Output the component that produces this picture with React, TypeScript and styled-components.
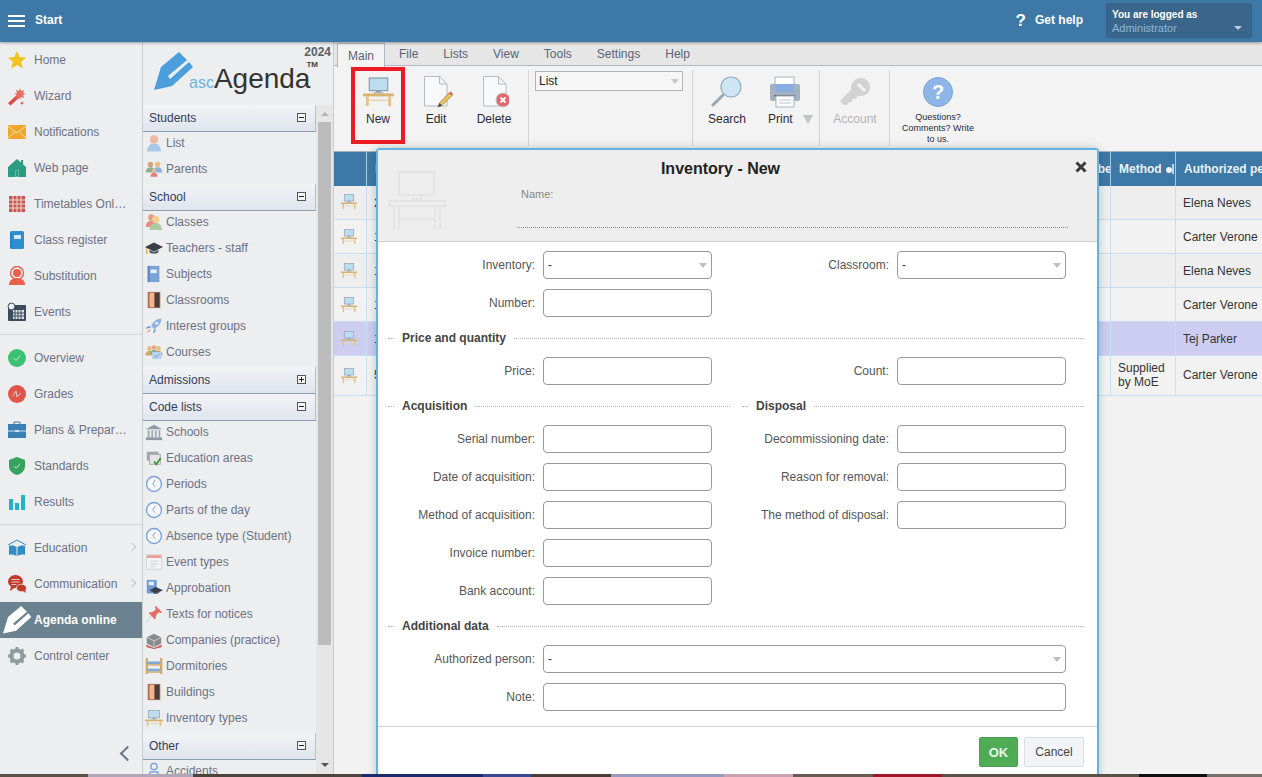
import React from 'react';
import styled, { createGlobalStyle } from 'styled-components';

const Global = createGlobalStyle`
  html, body { margin: 0; padding: 0; height: 100%; overflow: hidden; }
  body { font-family: "Liberation Sans", Arial, sans-serif; font-size: 12px; }
  #root { height: 100%; }
  * { box-sizing: border-box; }
`;

/* ---------- icons ---------- */
const Ico: React.FC<{ s?: number; v?: string; children: React.ReactNode }> = ({ s = 18, v = '0 0 20 20', children }) => (
  <svg width={s} height={s} viewBox={v} aria-hidden="true">{children}</svg>
);

const PENCIL = '0,38 7,15 25,0 33,8 14,24 16,27 35,10 39,15 18,34';
const PencilLogo: React.FC<{ s: number; c: string }> = ({ s, c }) => (
  <svg width={s} height={s} viewBox="0 0 40 40" aria-hidden="true"><polygon points={PENCIL} fill={c} /></svg>
);

const Desk: React.FC<{ w: number }> = ({ w }) => (
  <svg width={w} height={w * 0.94} viewBox="0 0 32 30" aria-hidden="true">
    <rect x="6.5" y="1" width="19" height="13" fill="#bcdcf0" stroke="#8b9bab" strokeWidth="1.2" />
    <rect x="13.5" y="14" width="5" height="2" fill="#8b9bab" />
    <rect x="11" y="15.5" width="10" height="1.5" fill="#aab6c0" />
    <rect x="6" y="23" width="20" height="2" fill="#e6d9bf" />
    <rect x="3" y="20" width="3" height="10" fill="#e0c48e" />
    <rect x="26" y="20" width="3" height="10" fill="#e0c48e" />
    <rect x="0" y="17" width="32" height="3" fill="#d8b26f" />
  </svg>
);

const FaintDesk = () => (
  <svg width="58" height="60" viewBox="0 0 58 60" fill="none" stroke="#e4e4e4" strokeWidth="2" aria-hidden="true">
    <rect x="11" y="2" width="35" height="23" />
    <path d="M25 25v4h8v-4M20 31h18" />
    <rect x="1" y="31" width="56" height="5" />
    <rect x="6" y="36" width="5" height="24" />
    <rect x="47" y="36" width="5" height="24" />
    <path d="M11 49h36" />
  </svg>
);

const DocBase = () => (
  <path d="M.5 .5h15l7.500 7.500v22H.5z M15.500 .5v7.500h7.500" fill="#f8f9fb" stroke="#b3bcc8" strokeWidth="1" />
);
const EditDoc = () => (
  <svg width="34" height="32" viewBox="0 0 34 32" aria-hidden="true">
    <g transform="translate(5 0)"><DocBase /></g>
    <path d="M19 31l1.500 -4 9.500 -10 3 2.500 -10 10z" fill="#edc35c" stroke="#8a7240" strokeWidth="0.7" />
    <path d="M30 17l3 2.500 1 -1.500 -2.500 -2.500z" fill="#e0605c" />
    <path d="M19 31l1.500 -4 2.500 2.500z" fill="#444" />
  </svg>
);
const DeleteDoc = () => (
  <svg width="30" height="32" viewBox="0 0 30 32" aria-hidden="true">
    <g transform="translate(4 0)"><DocBase /></g>
    <circle cx="24" cy="24" r="7" fill="#e2666c" stroke="#c8c8c8" />
    <path d="M21.500 21.500l5 5m0 -5l-5 5" stroke="#fff" strokeWidth="1.8" />
  </svg>
);
const SearchIco = () => (
  <svg width="32" height="32" viewBox="0 0 32 32" aria-hidden="true">
    <line x1="2" y1="29" x2="12" y2="19" stroke="#9aa8b4" strokeWidth="3" strokeLinecap="round" />
    <circle cx="20" cy="11" r="10" fill="#cfe5f6" stroke="#8facbe" strokeWidth="1.2" />
  </svg>
);
const PrintIco = () => (
  <svg width="32" height="32" viewBox="0 0 32 32" aria-hidden="true">
    <rect x="6" y="1" width="19" height="10" fill="#fff" stroke="#a8b2bc" />
    <rect x="1" y="8" width="30" height="17" rx="2" fill="#a4b1c3" />
    <rect x="6" y="8" width="19" height="8" fill="#88ade0" />
    <rect x="5" y="19" width="21" height="1.5" fill="#5c6878" />
    <rect x="7" y="20" width="18" height="11" fill="#fff" stroke="#a8b2bc" />
    <path d="M10 24h12M10 27h12" stroke="#b8c2cc" />
  </svg>
);
const KeyIco = () => (
  <svg width="32" height="32" viewBox="0 0 32 32" aria-hidden="true">
    <path d="M1 25l11 -11c-1 -7 4 -12 10 -12 5 0 9 4 9 9 0 6 -6 10 -12 9l-3 3h-3v3h-3l-2 3h-3z" fill="#d2d2d2" />
    <path d="M19 8l7 7" stroke="#f3f3f3" strokeWidth="3" />
  </svg>
);
const HelpIco = () => (
  <svg width="30" height="30" viewBox="0 0 30 30" aria-hidden="true">
    <circle cx="15" cy="15" r="14.5" fill="#8db5e8" stroke="#7aa2d4" />
    <text x="15" y="22" textAnchor="middle" fontFamily="Liberation Sans" fontWeight="700" fontSize="20" fill="#fff">?</text>
  </svg>
);

const navIcons: Record<string, React.ReactNode> = {
  star: <Ico s={20}><polygon points="10,1 12.7,7 19,7.6 14.2,12 15.7,18.6 10,15.1 4.3,18.6 5.8,12 1,7.6 7.3,7" fill="#f2c31c" /></Ico>,
  wand: <Ico s={20}><path d="M1 17l10 -9 2.5 2.5 -10 9z" fill="#d94f44" /><path d="M13 2l1 3 3 -1 -1 3 3 1 -3 1 1 3 -3 -1 -1 3 -1 -3 -3 1 1 -3 -3 -1 3 -1 -1 -3 3 1z" fill="#e66f63" /><path d="M15 15l.6 1.5 1.5.6 -1.5.6 -.6 1.5 -.6 -1.5 -1.5 -.6 1.5 -.6z" fill="#d94f44" /></Ico>,
  mail: <Ico s={20}><rect x="1" y="3" width="18" height="14" fill="#f0a52c" /><path d="M1 4l9 7 9 -7M1 16l7 -6.5M19 16l-7 -6.5" stroke="#fbe2b6" fill="none" /></Ico>,
  house: <Ico s={20}><path d="M10 1l9 8v10H1V9zM14 2h2v4h-2z" fill="#2c9b83" /><rect x="8" y="12" width="4" height="7" fill="#5cbba6" /><rect x="9" y="13" width="2" height="5" fill="#2c9b83" /></Ico>,
  table: <Ico s={20}><rect x="2" y="2" width="16" height="16" fill="#c9564f" /><path d="M6 2v16M10 2v16M14 2v16M2 6h16M2 10h16M2 14h16" stroke="#f0d8d5" strokeWidth="1" /></Ico>,
  book: <Ico s={20}><rect x="3" y="1" width="14" height="18" rx="1.5" fill="#2e8fd0" /><rect x="7" y="5" width="7" height="4" fill="#d4e9f7" /><path d="M3 4h2M3 8h2M3 12h2M3 16h2" stroke="#1b6aa0" /></Ico>,
  sub: <Ico s={20}><circle cx="10" cy="7" r="6.5" fill="none" stroke="#e8604c" strokeWidth="1.4" /><circle cx="10" cy="7" r="4" fill="#e8604c" /><path d="M2 19c0 -5 4 -7 8 -7s8 2 8 7z" fill="#e8604c" /></Ico>,
  events: <Ico s={20}><rect x="1" y="3" width="18" height="16" rx="1" fill="#3b4b5d" /><rect x="6" y="8" width="11" height="9" fill="#dfe4e8" /><path d="M8 8v9M11 8v9M14 8v9M6 11h11M6 14h11" stroke="#3b4b5d" /><circle cx="4.5" cy="4.5" r="3.4" fill="#eceef0" stroke="#3b4b5d" /></Ico>,
  ok: <Ico s={20}><circle cx="10" cy="10" r="9" fill="#3cc173" /><path d="M6.5 10l2.5 2.5 4.5 -5" stroke="#c9f0d7" fill="none" /></Ico>,
  grades: <Ico s={20}><circle cx="10" cy="10" r="9" fill="#e0564a" /><path d="M6 12l3 -5 1 6 4 -4" stroke="#f6d0cb" fill="none" /></Ico>,
  plans: <Ico s={20}><path d="M7 4V2h6v2" fill="none" stroke="#3a80b4" /><rect x="1" y="4" width="18" height="14" fill="#3a80b4" /><path d="M1 11h18" stroke="#cfe2ef" /><rect x="8" y="10" width="4" height="2" fill="#cfe2ef" /></Ico>,
  shield: <Ico s={20}><path d="M10 1l8 3v6c0 5 -4 8 -8 9 -4 -1 -8 -4 -8 -9V4z" fill="#34a45f" /><path d="M7 10l2.2 2.2 4 -4.5" stroke="#c9ecd7" fill="none" /></Ico>,
  bars: <Ico s={20}><rect x="2" y="7" width="4" height="11" fill="#1fb3cb" /><rect x="8" y="11" width="4" height="7" fill="#1fb3cb" /><rect x="14" y="3" width="4" height="15" fill="#1fb3cb" /></Ico>,
  edu: <Ico s={20}><path d="M1 7l9 -5 9 5" stroke="#2f8cc4" fill="none" /><path d="M2 8c3 -1 6 0 7.5 1v9C8 17 5 16 2 17zM18 8c-3 -1 -6 0 -7.5 1v9c1.500 -1 4.500 -2 7.500 -1z" fill="#2f8cc4" /></Ico>,
  chat: <Ico s={20}><ellipse cx="8.500" cy="7.500" rx="7.500" ry="6.500" fill="#c0392b" /><path d="M4 12l-1 5 5 -3.500z" fill="#c0392b" /><path d="M4.500 5.500h8M4.500 8h8M4.500 10.500h5" stroke="#f1c9c4" /><ellipse cx="14.500" cy="14" rx="5" ry="3.800" fill="#c0392b" stroke="#eceef0" strokeWidth=".8" /><path d="M16 17l3 2 -1 -3.500z" fill="#c0392b" /></Ico>,
  agenda: <PencilLogo s={29} c="#ffffff" />,
  gear: <Ico s={20}><circle cx="10" cy="10" r="5.500" fill="none" stroke="#8c9c9e" strokeWidth="4" /><path d="M10 1v3M10 16v3M1 10h3M16 10h3M3.600 3.600l2.100 2.100M14.300 14.300l2.100 2.100M3.600 16.400l2.100 -2.100M14.300 5.700l2.100 -2.100" stroke="#8c9c9e" strokeWidth="3" /></Ico>,
};

const Head: React.FC<{ x: number; y: number; r: number; c: string; b: string }> = ({ x, y, r, c, b }) => (
  <g><path d={`M${x - r * 1.7} ${y + r * 3}c0 ${-r * 1.6} ${r} ${-r * 2} ${r * 1.7} ${-r * 2}s${r * 1.7} ${r * 0.4} ${r * 1.7} ${r * 2}z`} fill={b} /><circle cx={x} cy={y} r={r} fill={c} /></g>
);
const Clock = () => <Ico><circle cx="10" cy="10" r="8.300" fill="#f3f6fa" stroke="#7ba3d8" strokeWidth="1.500" /><path d="M11.500 5.500L8.500 10l3 3" fill="none" stroke="#8a98a8" /></Ico>;
const Door = () => <Ico><rect x="3" y="1" width="14" height="18" fill="#a8715a" /><rect x="5" y="2" width="5" height="16" fill="#f0b58c" /><rect x="11" y="2" width="5" height="16" fill="#4a3c38" /></Ico>;

const sideIcons: Record<string, React.ReactNode> = {
  student: <Ico><Head x={10} y={6} r={4.500} c="#f0b9a0" b="#a9c8ea" /></Ico>,
  parents: <Ico><Head x={6} y={5} r={3} c="#d6a080" b="#8fb28a" /><Head x={14} y={5} r={3} c="#e8c080" b="#8fb0dc" /><Head x={10} y={12} r={2.200} c="#f0b9a0" b="#e07d78" /></Ico>,
  classes: <Ico><Head x={7} y={5} r={3.500} c="#e49c84" b="#e88a80" /><Head x={12} y={7} r={4} c="#f0cf90" b="#a8cca0" /></Ico>,
  cap: <Ico><path d="M10 4l10 5 -10 5 -10 -5z" fill="#3a3f47" /><path d="M5 12v3c3 2 7 2 10 0v-3l-5 2.500z" fill="#555b64" /><path d="M2 10v7" stroke="#e0a040" strokeWidth="1.200" /></Ico>,
  subject: <Ico><rect x="3" y="1" width="13" height="18" fill="#7ba3d8" /><rect x="6" y="5" width="7" height="4" fill="#e6eef8" /><rect x="3" y="1" width="2" height="18" fill="#5a86c0" /></Ico>,
  door: <Door />,
  rocket: <Ico><path d="M18 2c-5 0 -9 3 -11 8l3 3c5 -2 8 -6 8 -11z" fill="#8db2e6" /><path d="M6 10l-4 1 -1 2 5 -1zM10 14l-1 4 2 -1 1 -5z" fill="#6f96d0" /><path d="M5 14l-3 4 4 -3z" fill="#e06a5a" /><circle cx="13" cy="7" r="1.500" fill="#fff" /></Ico>,
  courses: <Ico><Head x={5} y={6} r={2.600} c="#e8bc80" b="#d8a860" /><Head x={10} y={5} r={2.600} c="#e0a890" b="#88b090" /><Head x={15} y={6} r={2.600} c="#e8c080" b="#c0a070" /><rect x="8" y="10" width="10" height="8" fill="#b8d4f0" /><path d="M10 14l2 2 4 -4" stroke="#6a90c0" fill="none" /></Ico>,
  museum: <Ico><path d="M10 2l9 5H1z" fill="#8f9aa6" /><path d="M3 8h2v8H3zM7 8h2v8H7zM11 8h2v8h-2zM15 8h2v8h-2z" fill="#a0aab4" /><rect x="1" y="16" width="18" height="3" fill="#8f9aa6" /></Ico>,
  areas: <Ico><rect x="2" y="3" width="13" height="10" fill="#a6a6a6" /><rect x="5" y="6" width="12" height="11" fill="#e4e4e4" stroke="#aaa" /><path d="M10 14l2.500 3 5 -7" stroke="#3a9a3a" strokeWidth="2" fill="none" /></Ico>,
  clock: <Clock />,
  calendar: <Ico><rect x="1.500" y="2" width="17" height="16" fill="#f4f4f4" stroke="#cdd3d8" /><rect x="2" y="2.500" width="16" height="3" fill="#e89a94" /><path d="M6 9h9M6 12h9M6 15h6" stroke="#dce0e4" strokeWidth="2" /></Ico>,
  approb: <Ico><rect x="2" y="1" width="11" height="15" fill="#6d9ad8" /><rect x="4" y="3" width="6" height="4" fill="#e4edf8" /><path d="M12 9l8 3.500 -8 3.500 -7 -3.500z" fill="#3a3f47" /><path d="M8 15c2 2 6 2 8 0v-2l-4 2z" fill="#555" /></Ico>,
  pin: <Ico><path d="M1 19l7 -8" stroke="#c8c8c8" /><path d="M12 1l7 7 -2 1 -2 -1 -3 4 0 3 -1 1 -7 -7 1 -1h3l4 -3 -1 -3z" fill="#e96a62" /></Ico>,
  company: <Ico><path d="M2 7l8 -4 8 4v7l-8 4 -8 -4z" fill="#8a8a8a" /><path d="M2 7l8 4 8 -4M10 11v7" stroke="#d0d0d0" fill="none" /><path d="M1 15l9 4 9 -4 -1 3 -8 2 -8 -2z" fill="#c86058" /></Ico>,
  bunk: <Ico><path d="M2 1v18M18 1v18" stroke="#d0a868" strokeWidth="2.500" /><rect x="3" y="5" width="14" height="3" fill="#7ea8d8" /><rect x="3" y="8" width="14" height="1.500" fill="#d0a868" /><rect x="3" y="13" width="14" height="3" fill="#7ea8d8" /><rect x="3" y="16" width="14" height="1.500" fill="#d0a868" /></Ico>,
  building: <Door />,
  desk: <Desk w={18} />,
  accident: <Ico><circle cx="10" cy="5" r="3.500" fill="none" stroke="#6d9ad8" strokeWidth="1.400" /><path d="M3 19l3 -8h8l3 8" fill="none" stroke="#6d9ad8" strokeWidth="1.400" /></Ico>,
};

/* ---------- page frame ---------- */
const Root = styled.div`
  display: flex;
  flex-direction: column;
  width: 100%;
  height: 100%;
  overflow: hidden;
  background: #f2f2f2;
`;
const TopBar = styled.header`
  flex: 0 0 42px;
  display: flex;
  align-items: center;
  padding-bottom: 1px;
  position: relative;
  z-index: 5;
  background: #3e78a6;
  box-shadow: 0 1px 3px rgba(0, 0, 0, 0.35);
  color: #fff;
`;
const Burger = styled.div`
  width: 17px;
  height: 12px;
  margin: 0 10px 0 8px;
  border-top: 2px solid #fff;
  border-bottom: 2px solid #fff;
  position: relative;
  &::after {
    content: '';
    position: absolute;
    left: 0;
    right: 0;
    top: 3px;
    height: 2px;
    background: #fff;
  }
`;
const StartText = styled.span`
  font-weight: 700;
  font-size: 12px;
  flex: 1;
  margin-bottom: 2px;
`;
const HelpMark = styled.span`
  font-weight: 700;
  font-size: 17px;
  margin-right: 9px;
`;
const HelpText = styled.span`
  font-weight: 700;
  font-size: 12px;
  margin-right: 23px;
  margin-bottom: 2px;
`;
const UserBox = styled.div`
  width: 146px;
  height: 35px;
  margin-right: 10px;
  padding: 4px 5px 0;
  background: #3a668c;
  border: 1px solid #37618a;
  border-radius: 2px;
  position: relative;
`;
const UserTitle = styled.div`
  font-size: 10px;
  font-weight: 700;
  line-height: 13px;
`;
const UserName = styled.div`
  font-size: 11px;
  line-height: 15px;
  color: #8fb6d8;
`;
const UserArrow = styled.i`
  position: absolute;
  right: 9px;
  bottom: 7px;
  border: 4px solid transparent;
  border-top-color: #b8cde0;
  border-bottom-width: 0;
`;
const Body = styled.div`
  flex: 1;
  min-height: 0;
  display: flex;
`;
const Strip = styled.div`
  flex: 0 0 3px;
  background: linear-gradient(
    to right,
    #5a5045 0 88px, #b0a8b8 88px 193px, #4c443e 193px 362px, #1c2a6e 362px 483px, #3a4a90 483px 531px,
    #4a3c38 531px 611px, #9a9ac0 611px 724px, #c8a0b0 724px 793px, #6a5c50 793px 873px, #a01828 873px 942px,
    #5a5045 942px 1139px, #111 1139px 1207px, #77706a 1207px
  );
`;

/* ---------- left navigation ---------- */
const Nav = styled.nav`
  flex: 0 0 143px;
  display: flex;
  flex-direction: column;
  background: #eceef0;
  border-right: 1px solid #c9cbcd;
`;
const NavItem = styled.div<{ $active?: boolean }>`
  height: 36px;
  flex: none;
  display: flex;
  align-items: center;
  position: relative;
  font-size: 12px;
  color: ${(p) => (p.$active ? '#fff' : '#6d7285')};
  font-weight: ${(p) => (p.$active ? 700 : 400)};
  background: ${(p) => (p.$active ? '#6b8390' : 'transparent')};
  white-space: nowrap;
`;
const NavIcon = styled.span`
  flex: 0 0 34px;
  display: flex;
  justify-content: center;
  align-items: center;
`;
const NavLabel = styled.span`
  width: 94px;
  overflow: hidden;
  text-overflow: ellipsis;
`;
const NavChevron = styled.span`
  position: absolute;
  right: 7px;
  top: 14px;
  width: 6px;
  height: 6px;
  border-top: 1px solid #c4c7cb;
  border-right: 1px solid #c4c7cb;
  transform: rotate(45deg);
`;
const NavDivider = styled.div`
  flex: none;
  height: 0;
  border-top: 1px solid #d4d6d8;
  margin: 4px 0 5px;
`;
const Collapse = styled.div`
  margin-top: auto;
  margin-bottom: 15px;
  align-self: flex-end;
  margin-right: 9px;
  width: 11px;
  height: 11px;
  border-left: 2px solid #6a7a8a;
  border-bottom: 2px solid #6a7a8a;
  transform: rotate(45deg);
`;

/* ---------- secondary sidebar ---------- */
const Sidebar = styled.aside`
  flex: 0 0 191px;
  display: flex;
  flex-direction: column;
  background: #eceef0;
  border-right: 1px solid #c9cbcd;
  min-height: 0;
`;
const LogoBlock = styled.div`
  flex: 0 0 63px;
  display: flex;
  align-items: flex-end;
  padding: 0 0 13px 11px;
  position: relative;
`;
const LogoYear = styled.span`
  position: absolute;
  right: 2px;
  top: 3px;
  font-size: 12px;
  font-weight: 700;
  color: #5a5f68;
`;
const LogoAsc = styled.span`
  font-size: 16px;
  line-height: 16px;
  color: #6fb1e2;
  margin-left: -5px;
  margin-bottom: 1px;
`;
const LogoWord = styled.span`
  font-size: 28px;
  line-height: 20px;
  color: #333;
  margin-bottom: 3px;
`;
const LogoTm = styled.span`
  font-size: 8px;
  font-weight: 700;
  line-height: 8px;
  color: #444;
  align-self: flex-start;
  margin: 19px 0 0 -4px;
`;
const SideScroll = styled.div`
  flex: 1;
  min-height: 0;
  display: flex;
  overflow: hidden;
`;
const SideList = styled.div`
  flex: 0 0 173px;
  min-width: 0;
`;
const GroupHead = styled.div`
  height: 27px;
  display: flex;
  align-items: center;
  justify-content: space-between;
  padding: 0 9px 1px 6px;
  font-size: 12px;
  color: #333c58;
  background: linear-gradient(#f2f3f6, #dfe5ee);
  border-bottom: 1px solid #8f9bb0;
  border-right: 1px solid #b8c0cc;
`;
const Toggle = styled.span<{ $open?: boolean }>`
  width: 9px;
  height: 9px;
  border: 1px solid #555;
  position: relative;
  background: #f4f5f7;
  &::before {
    content: '';
    position: absolute;
    left: 1px;
    right: 1px;
    top: 3px;
    height: 1px;
    background: #222;
  }
  &::after {
    content: '';
    position: absolute;
    top: 1px;
    bottom: 1px;
    left: 3px;
    width: 1px;
    background: #222;
    display: ${(p) => (p.$open ? 'none' : 'block')};
  }
`;
const SideItem = styled.div`
  height: 26px;
  padding: 0 0 4px 2px;
  display: flex;
  align-items: center;
  gap: 3px;
  font-size: 12px;
  color: #6d7285;
  white-space: nowrap;
`;
const ScrollTrack = styled.div`
  flex: 0 0 17px;
  background: #e6e6e6;
  display: flex;
  flex-direction: column;
  align-items: center;
  position: relative;
`;
const ScrollUp = styled.i`
  margin-top: 7px;
  border: 4px solid transparent;
  border-bottom-color: #b4b4b4;
  border-top-width: 0;
`;
const ScrollThumb = styled.div`
  width: 13px;
  height: 523px;
  margin-top: 6px;
  background: #bcbcbc;
`;
const ScrollDown = styled.i`
  position: absolute;
  bottom: 7px;
  border: 4px solid transparent;
  border-top-color: #555;
  border-bottom-width: 0;
`;

/* ---------- main area ---------- */
const Main = styled.main`
  flex: 1;
  min-width: 0;
  position: relative;
  overflow: hidden;
  background: #f2f2f2;
`;
const TabBar = styled.div`
  height: 24px;
  display: flex;
  padding-left: 3px;
  background: #e6e6e6;
  border-bottom: 1px solid #b0b8c4;
  font-size: 12px;
  color: #5a6478;
`;
const Tab = styled.div<{ $active?: boolean }>`
  height: ${(p) => (p.$active ? '24px' : '23px')};
  margin-top: ${(p) => (p.$active ? '1px' : '0')};
  display: flex;
  align-items: center;
  padding: 0 ${(p) => (p.$active ? '10px' : '12px')};
  margin-left: 1px;
  ${(p) => p.$active && 'margin-left: 0; margin-right: 1px; background: #f3f3f3; border: 1px solid #b0b8c4; border-bottom: none;'}
`;
const Ribbon = styled.div`
  height: 85px;
  display: flex;
  align-items: flex-start;
  padding: 1px 0 0 15px;
  background: #f3f3f3;
`;
const Tool = styled.div<{ $w?: number; $ml?: number; $dim?: boolean; $mark?: boolean }>`
  flex: 0 0 ${(p) => p.$w ?? 58}px;
  margin-left: ${(p) => p.$ml ?? 0}px;
  position: relative;
  display: flex;
  flex-direction: column;
  align-items: center;
  font-size: 12px;
  color: ${(p) => (p.$dim ? '#b4b4b4' : '#2a2a38')};
  ${(p) =>
    p.$mark &&
    `&::after {
      content: '';
      position: absolute;
      left: 2px;
      right: 2px;
      top: 0;
      height: 69px;
      border: 4px solid #ed1c24;
    }`}
`;
const ToolIcon = styled.div`
  height: 45px;
  display: flex;
  align-items: center;
  justify-content: center;
  padding-top: 4px;
`;
const ToolLabel = styled.div`
  line-height: 14px;
  white-space: nowrap;
`;
const PrintLabel = styled.div`
  align-self: flex-start;
  display: flex;
  align-items: center;
  line-height: 14px;
  padding-left: 12px;
`;
const PrintArrow = styled.i`
  margin-left: 10px;
  border: 5px solid transparent;
  border-top: 9px solid #c0c4c8;
  border-bottom-width: 0;
`;
const SmallNote = styled.div`
  font-size: 9px;
  line-height: 11px;
  text-align: center;
  color: #2a2a38;
  white-space: nowrap;
`;
const RibbonRule = styled.div<{ $ml: number }>`
  flex: 0 0 1px;
  height: 76px;
  margin: 3px 0 0 ${(p) => p.$ml}px;
  background: #d6d6d6;
`;
const ViewSelect = styled.div`
  flex: 0 0 148px;
  height: 20px;
  margin: 4px 0 0 6px;
  padding-left: 3px;
  border: 1px solid #b4b4b4;
  background: #f6f6f6;
  font-size: 12px;
  line-height: 18px;
  color: #222;
  position: relative;
`;
const LightCaret = styled.i`
  position: absolute;
  right: 3px;
  top: 7px;
  border: 4px solid transparent;
  border-top: 5px solid #c8c8c8;
  border-bottom-width: 0;
`;

/* ---------- data table ---------- */
const DataTable = styled.table`
  width: 929px;
  margin-left: -1px;
  table-layout: fixed;
  border-collapse: collapse;
  border-top: 1px solid #a8b0b8;
  tbody tr:first-child td {
    padding-top: 2px;
  }
`;
const HeadCell = styled.th`
  height: 34px;
  padding: 0 0 0 8px;
  background: #3e78a6;
  color: #e8f3fb;
  font-size: 12px;
  font-weight: 700;
  text-align: left;
  white-space: nowrap;
  overflow: hidden;
  border-right: 1px solid #a8c8e0;
`;
const SortMark = styled.svg`
  margin-left: 4px;
  vertical-align: -1px;
`;
const Row = styled.tr<{ $tone: 'a' | 'b' | 'sel' }>`
  background: ${(p) => (p.$tone === 'sel' ? '#cccdf0' : p.$tone === 'a' ? '#eeeeee' : '#f2f2f2')};
`;
const Cell = styled.td<{ $tall?: boolean; $wrap?: boolean }>`
  height: ${(p) => (p.$tall ? 40 : 34)}px;
  padding: 0 4px ${(p) => (p.$tall ? 2 : 0)}px 7px;
  font-size: 12px;
  line-height: 14px;
  color: #333;
  overflow: hidden;
  white-space: ${(p) => (p.$wrap ? 'normal' : 'nowrap')};
  border: 1px solid #c6dff2;
  border-top: none;
`;
const IconCell = styled(Cell)`
  padding: 4px 2px 0 0;
  text-align: center;
`;

/* ---------- dialog ---------- */
const Dialog = styled.section`
  position: absolute;
  left: 42px;
  top: 106px;
  width: 723px;
  height: 640px;
  border: 2px solid #5fb4e6;
  border-radius: 4px 4px 0 0;
  background: #fff;
  box-shadow: 0 0 10px rgba(0, 0, 0, 0.2);
  z-index: 3;
`;
const DialogHead = styled.div`
  height: 92px;
  display: grid;
  grid-template-columns: 139px 551px;
  grid-template-rows: 38px 40px;
  background: #eeeeee;
  border-bottom: 1px solid #cfcfcf;
  position: relative;
`;
const DialogIcon = styled.div`
  grid-row: 1 / 3;
  grid-column: 1;
  padding: 20px 0 0 10px;
`;
const DialogTitle = styled.h2`
  grid-row: 1;
  grid-column: 1 / -1;
  margin: 0;
  padding: 10px 0 0 0;
  width: 685px;
  text-align: center;
  font-size: 16px;
  line-height: 18px;
  font-weight: 700;
  color: #222;
`;
const NameField = styled.div`
  grid-row: 2;
  grid-column: 2;
  padding-left: 4px;
  font-size: 11px;
  line-height: 12px;
  color: #888;
  border-bottom: 1px dotted #8c8c8c;
`;
const CloseBtn = styled.svg`
  position: absolute;
  right: 10px;
  top: 11px;
`;
const DialogBody = styled.div`
  padding-top: 9px;
  height: 485px;
  border-bottom: 1px solid #d0d0d0;
`;
const FieldRow = styled.div`
  display: grid;
  grid-template-columns: 157px 169px 169px 169px;
  column-gap: 8px;
  align-items: center;
  height: 28px;
  margin-bottom: 10px;
  &:last-child {
    margin-bottom: 0;
  }
`;
const FieldLabel = styled.label`
  text-align: right;
  font-size: 12px;
  color: #555;
  white-space: nowrap;
`;
const TextBox = styled.input<{ $wide?: boolean }>`
  height: 28px;
  width: 100%;
  ${(p) => p.$wide && 'grid-column: 2 / 5;'}
  border: 1px solid #999;
  border-radius: 4px;
  background: #fff;
  padding: 0 4px;
  font: 12px "Liberation Sans", Arial, sans-serif;
  outline: none;
`;
const SelectBox = styled.div<{ $wide?: boolean }>`
  height: 28px;
  ${(p) => p.$wide && 'grid-column: 2 / 5;'}
  border: 1px solid #999;
  border-radius: 4px;
  background: #fff;
  padding-left: 4px;
  font-size: 12px;
  line-height: 26px;
  color: #333;
  position: relative;
`;
const SelectCaret = styled.i`
  position: absolute;
  right: 4px;
  top: 11px;
  border: 4px solid transparent;
  border-top: 5px solid #bdbdbd;
  border-bottom-width: 0;
`;
const SectionRow = styled.div`
  display: flex;
  gap: 12px;
  padding: 0 14px 0 10px;
  margin: 14px 0 12px;
  height: 14px;
`;
const Section = styled.div<{ $w?: number }>`
  flex: ${(p) => (p.$w ? `0 0 ${p.$w}px` : 1)};
  display: flex;
  align-items: center;
  gap: 8px;
  font-size: 12px;
  font-weight: 700;
  color: #444;
  white-space: nowrap;
  &::before {
    content: '';
    flex: 0 0 6px;
    border-top: 1px dotted #b0b0b0;
  }
  &::after {
    content: '';
    flex: 1;
    border-top: 1px dotted #b0b0b0;
  }
`;
const DialogFoot = styled.div`
  display: flex;
  justify-content: flex-end;
  gap: 6px;
  padding: 10px 13px 0 0;
`;
const OkBtn = styled.button`
  width: 39px;
  height: 30px;
  border: 1px solid #4a9f50;
  border-radius: 2px;
  background: #4fac55;
  color: #e9f7ea;
  font: 700 13px "Liberation Sans", Arial, sans-serif;
  padding: 0;
`;
const CancelBtn = styled.button`
  width: 60px;
  height: 30px;
  border: 1px solid #dcdde2;
  border-radius: 2px;
  background: #f3f4f8;
  color: #444;
  font: 12px "Liberation Sans", Arial, sans-serif;
  padding: 0;
`;

/* ---------- data ---------- */
type NavEntry = { label: string; icon: string; arrow?: boolean; active?: boolean } | 'divider';
const navEntries: NavEntry[] = [
  { label: 'Home', icon: 'star' },
  { label: 'Wizard', icon: 'wand' },
  { label: 'Notifications', icon: 'mail' },
  { label: 'Web page', icon: 'house' },
  { label: 'Timetables Online', icon: 'table' },
  { label: 'Class register', icon: 'book' },
  { label: 'Substitution', icon: 'sub' },
  { label: 'Events', icon: 'events' },
  'divider',
  { label: 'Overview', icon: 'ok' },
  { label: 'Grades', icon: 'grades' },
  { label: 'Plans & Preparations', icon: 'plans' },
  { label: 'Standards', icon: 'shield' },
  { label: 'Results', icon: 'bars' },
  'divider',
  { label: 'Education', icon: 'edu', arrow: true },
  { label: 'Communication', icon: 'chat', arrow: true },
  { label: 'Agenda online', icon: 'agenda', active: true },
  { label: 'Control center', icon: 'gear' },
];

const sideGroups: { title: string; open: boolean; items: [string, string][] }[] = [
  { title: 'Students', open: true, items: [['List', 'student'], ['Parents', 'parents']] },
  {
    title: 'School',
    open: true,
    items: [
      ['Classes', 'classes'], ['Teachers - staff', 'cap'], ['Subjects', 'subject'],
      ['Classrooms', 'door'], ['Interest groups', 'rocket'], ['Courses', 'courses'],
    ],
  },
  { title: 'Admissions', open: false, items: [] },
  {
    title: 'Code lists',
    open: true,
    items: [
      ['Schools', 'museum'], ['Education areas', 'areas'], ['Periods', 'clock'], ['Parts of the day', 'clock'],
      ['Absence type (Student)', 'clock'], ['Event types', 'calendar'], ['Approbation', 'approb'],
      ['Texts for notices', 'pin'], ['Companies (practice)', 'company'], ['Dormitories', 'bunk'],
      ['Buildings', 'building'], ['Inventory types', 'desk'],
    ],
  },
  { title: 'Other', open: true, items: [['Accidents', 'accident']] },
];

const rows: { no: string; method: string; person: string; tone: 'a' | 'b' | 'sel'; tall?: boolean }[] = [
  { no: '2024/1', method: '', person: 'Elena Neves', tone: 'a' },
  { no: '1', method: '', person: 'Carter Verone', tone: 'b' },
  { no: '1', method: '', person: 'Elena Neves', tone: 'a' },
  { no: '1', method: '', person: 'Carter Verone', tone: 'b' },
  { no: '1', method: '', person: 'Tej Parker', tone: 'sel' },
  { no: '5', method: 'Supplied by MoE', person: 'Carter Verone', tone: 'b', tall: true },
];

const Field: React.FC<{ label: string; select?: boolean; wide?: boolean }> = ({ label, select, wide }) => (
  <>
    <FieldLabel>{label}</FieldLabel>
    {select ? (
      <SelectBox $wide={wide}>-<SelectCaret /></SelectBox>
    ) : (
      <TextBox $wide={wide} aria-label={label} />
    )}
  </>
);

export default function App() {
  return (
    <Root>
      <Global />
      <TopBar>
        <Burger />
        <StartText>Start</StartText>
        <HelpMark>?</HelpMark>
        <HelpText>Get help</HelpText>
        <UserBox>
          <UserTitle>You are logged as</UserTitle>
          <UserName>Administrator</UserName>
          <UserArrow />
        </UserBox>
      </TopBar>
      <Body>
        <Nav>
          {navEntries.map((e, i) =>
            e === 'divider' ? (
              <NavDivider key={i} />
            ) : (
              <NavItem key={e.label} $active={e.active}>
                <NavIcon>{navIcons[e.icon]}</NavIcon>
                <NavLabel>{e.label}</NavLabel>
                {e.arrow && <NavChevron />}
              </NavItem>
            ),
          )}
          <Collapse />
        </Nav>
        <Sidebar>
          <LogoBlock>
            <PencilLogo s={40} c="#4a9fdc" />
            <LogoAsc>asc</LogoAsc>
            <LogoWord>Agenda</LogoWord>
            <LogoTm>TM</LogoTm>
            <LogoYear>2024</LogoYear>
          </LogoBlock>
          <SideScroll>
            <SideList>
              {sideGroups.map((g) => (
                <div key={g.title}>
                  <GroupHead>
                    {g.title}
                    <Toggle $open={g.open} />
                  </GroupHead>
                  {g.items.map(([label, icon]) => (
                    <SideItem key={label}>
                      {sideIcons[icon]}
                      {label}
                    </SideItem>
                  ))}
                </div>
              ))}
            </SideList>
            <ScrollTrack>
              <ScrollUp />
              <ScrollThumb />
              <ScrollDown />
            </ScrollTrack>
          </SideScroll>
        </Sidebar>
        <Main>
          <TabBar>
            {['Main', 'File', 'Lists', 'View', 'Tools', 'Settings', 'Help'].map((t, i) => (
              <Tab key={t} $active={i === 0}>{t}</Tab>
            ))}
          </TabBar>
          <Ribbon>
            <Tool $mark>
              <ToolIcon><Desk w={31} /></ToolIcon>
              <ToolLabel>New</ToolLabel>
            </Tool>
            <Tool>
              <ToolIcon><EditDoc /></ToolIcon>
              <ToolLabel>Edit</ToolLabel>
            </Tool>
            <Tool>
              <ToolIcon><DeleteDoc /></ToolIcon>
              <ToolLabel>Delete</ToolLabel>
            </Tool>
            <RibbonRule $ml={5} />
            <ViewSelect>List<LightCaret /></ViewSelect>
            <RibbonRule $ml={9} />
            <Tool $ml={5}>
              <ToolIcon><SearchIco /></ToolIcon>
              <ToolLabel>Search</ToolLabel>
            </Tool>
            <Tool>
              <ToolIcon><PrintIco /></ToolIcon>
              <PrintLabel>Print<PrintArrow /></PrintLabel>
            </Tool>
            <RibbonRule $ml={5} />
            <Tool $ml={6} $dim>
              <ToolIcon><KeyIco /></ToolIcon>
              <ToolLabel>Account</ToolLabel>
            </Tool>
            <RibbonRule $ml={5} />
            <Tool $ml={10} $w={76}>
              <ToolIcon><HelpIco /></ToolIcon>
              <SmallNote>Questions?<br />Comments? Write<br />to us.</SmallNote>
            </Tool>
          </Ribbon>
          <DataTable>
            <colgroup>
              <col width={33} />
              <col width={696} />
              <col width={48} />
              <col width={65} />
              <col width={87} />
            </colgroup>
            <thead>
              <tr>
                <HeadCell />
                <HeadCell>Name</HeadCell>
                <HeadCell>Number</HeadCell>
                <HeadCell>
                  Method
                  <SortMark width="9" height="10" viewBox="0 0 9 10" aria-hidden="true">
                    <circle cx="3" cy="6" r="3" fill="#e8f3fb" />
                    <path d="M7 0v10" stroke="#e8f3fb" strokeWidth="1.500" />
                  </SortMark>
                </HeadCell>
                <HeadCell>Authorized person</HeadCell>
              </tr>
            </thead>
            <tbody>
              {rows.map((r, i) => (
                <Row key={i} $tone={r.tone}>
                  <IconCell $tall={r.tall}><Desk w={16} /></IconCell>
                  <Cell $tall={r.tall}>{r.no}</Cell>
                  <Cell $tall={r.tall} />
                  <Cell $tall={r.tall} $wrap>{r.method}</Cell>
                  <Cell $tall={r.tall}>{r.person}</Cell>
                </Row>
              ))}
            </tbody>
          </DataTable>

          <Dialog>
            <DialogHead>
              <DialogIcon><FaintDesk /></DialogIcon>
              <DialogTitle>Inventory - New</DialogTitle>
              <NameField>Name:</NameField>
              <CloseBtn width="12" height="12" viewBox="0 0 12 12" aria-hidden="true">
                <path d="M1.500 1.500l9 9m0 -9l-9 9" stroke="#3c3c3c" strokeWidth="3" />
              </CloseBtn>
            </DialogHead>
            <DialogBody>
              <FieldRow>
                <Field label="Inventory:" select />
                <Field label="Classroom:" select />
              </FieldRow>
              <FieldRow><Field label="Number:" /></FieldRow>
              <SectionRow><Section>Price and quantity</Section></SectionRow>
              <FieldRow>
                <Field label="Price:" />
                <Field label="Count:" />
              </FieldRow>
              <SectionRow>
                <Section $w={342}>Acquisition</Section>
                <Section>Disposal</Section>
              </SectionRow>
              <FieldRow>
                <Field label="Serial number:" />
                <Field label="Decommissioning date:" />
              </FieldRow>
              <FieldRow>
                <Field label="Date of acquisition:" />
                <Field label="Reason for removal:" />
              </FieldRow>
              <FieldRow>
                <Field label="Method of acquisition:" />
                <Field label="The method of disposal:" />
              </FieldRow>
              <FieldRow><Field label="Invoice number:" /></FieldRow>
              <FieldRow><Field label="Bank account:" /></FieldRow>
              <SectionRow><Section>Additional data</Section></SectionRow>
              <FieldRow><Field label="Authorized person:" select wide /></FieldRow>
              <FieldRow><Field label="Note:" wide /></FieldRow>
            </DialogBody>
            <DialogFoot>
              <OkBtn>OK</OkBtn>
              <CancelBtn>Cancel</CancelBtn>
            </DialogFoot>
          </Dialog>
        </Main>
      </Body>
      <Strip />
    </Root>
  );
}
